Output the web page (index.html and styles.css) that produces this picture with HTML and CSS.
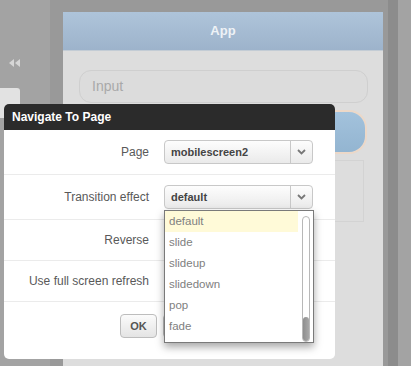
FILE: index.html
```html
<!DOCTYPE html>
<html lang="en">
<head>
    <meta charset="UTF-8">
    <meta name="viewport" content="width=device-width, initial-scale=1.0">
    <title>Navigate To Page</title>
    <link rel="stylesheet" href="styles.css">
</head>
<body>
    <div class="stage">
        <div class="sidebar">
            <div class="collapse">
                <svg width="12" height="8" viewBox="0 0 12 8"><path d="M0 4l5-4v8zM6 4l5-4v8z" fill="#d6d6d6"/></svg>
            </div>
            <div class="side-card"></div>
        </div>

        <div class="phone">
            <div class="screen">
                <div class="app-header">App</div>
                <div class="app-content">
                    <div class="app-input">Input</div>
                    <div class="app-button"></div>
                    <div class="app-box"></div>
                </div>
            </div>
        </div>
    </div>

    <!-- modal dialog over the designer -->
    <div class="dialog">
        <div class="dialog-title">Navigate To Page</div>

        <div class="form-row">
            <label class="form-label">Page</label>
            <div class="select">
                <span class="select-value">mobilescreen2</span>
                <span class="select-arrow">
                    <svg width="9" height="6" viewBox="0 0 9 6"><path d="M1 1l3.5 3.5L8 1" fill="none" stroke="#777" stroke-width="1.8"/></svg>
                </span>
            </div>
        </div>

        <div class="form-row">
            <label class="form-label">Transition effect</label>
            <div class="select">
                <span class="select-value">default</span>
                <span class="select-arrow">
                    <svg width="9" height="6" viewBox="0 0 9 6"><path d="M1 1l3.5 3.5L8 1" fill="none" stroke="#777" stroke-width="1.8"/></svg>
                </span>
            </div>
        </div>

        <div class="form-row check-row">
            <label class="form-label">Reverse</label>
            <input type="checkbox" class="check">
        </div>

        <div class="form-row check-row">
            <label class="form-label">Use full screen refresh</label>
            <input type="checkbox" class="check">
        </div>

        <div class="dialog-buttons">
            <button class="btn">OK</button>
            <button class="btn">Cancel</button>
        </div>
    </div>

    <div class="dropdown">
        <ul class="options">
            <li class="selected">default</li>
            <li>slide</li>
            <li>slideup</li>
            <li>slidedown</li>
            <li>pop</li>
            <li>fade</li>
            <li>flip</li>
        </ul>
        <div class="scrollbar">
            <div class="scroll-track">
                <div class="scroll-thumb"></div>
            </div>
        </div>
    </div>
</body>
</html>
```

FILE: styles.css
```css
body {
    margin: 0;
    width: 411px;
    height: 366px;
    overflow: hidden;
    background-color: #a3a3a3;
    font-family: 'Liberation Sans', Arial, sans-serif;
    position: relative;
}
.stage {
    display: flex;
    height: 366px;
}
.sidebar {
    width: 50px;
    padding-top: 59px;
    box-sizing: border-box;
}
.collapse {
    padding-left: 9px;
    height: 8px;
    line-height: 0;
}
.side-card {
    margin-top: 21px;
    width: 20px;
    height: 30px;
    background-color: #e2e2e2;
    border-radius: 0 3px 3px 0;
}
.phone {
    width: 348px;
    background-color: #999;
    padding: 12px 15px 0 13px;
    box-sizing: border-box;
    border-right: 10px solid #8c8c8c;
}
.screen {
    width: 320px;
    height: 354px;
    background-color: #dddddd;
}
.app-header {
    height: 38px;
    line-height: 38px;
    text-align: center;
    color: #eef2f6;
    font-weight: bold;
    font-size: 13px;
    background: linear-gradient(#aec4da, #9db3cb);
    border-bottom: 1px solid #c3ccd5;
}
.app-content {
    padding: 19px 15px 0 16px;
}
.app-input {
    height: 31px;
    line-height: 31px;
    border: 1px solid #cfcfcf;
    border-radius: 12px;
    background-color: #dcdcdc;
    color: #a9a9a9;
    font-size: 14px;
    padding-left: 12px;
}
.app-button {
    margin-top: 9px;
    margin-right: 3px;
    height: 40px;
    border-radius: 16px;
    background: linear-gradient(#a3c2dc, #93b5d1);
    box-shadow: 0 0 0 2px #ecd8c8;
}
.app-box {
    margin-top: 8px;
    margin-right: 4px;
    height: 60px;
    border: 1px solid #d3d3d3;
}

/* dialog */
.dialog {
    position: absolute;
    left: 4px;
    top: 104px;
    width: 331px;
    height: 255px;
    background-color: #fff;
    border-radius: 5px;
    overflow: hidden;
}
.dialog-title {
    height: 26px;
    line-height: 26px;
    background-color: #2b2b2b;
    color: #fff;
    font-weight: bold;
    font-size: 12px;
    padding-left: 8px;
}
.form-row {
    display: flex;
    align-items: center;
    padding: 10px 0;
    border-bottom: 1px solid #ebebeb;
}
.check-row {
    height: 20px;
}
.form-label {
    width: 145px;
    margin-right: 15px;
    text-align: right;
    font-size: 12px;
    color: #595959;
}
.select {
    display: flex;
    width: 149px;
    height: 24px;
    box-sizing: border-box;
    border: 1px solid #c8c8c8;
    border-radius: 4px;
    background: linear-gradient(#fdfdfd, #eaeaea);
}
.select-value {
    flex: 1;
    line-height: 22px;
    padding-left: 6px;
    font-size: 11px;
    font-weight: bold;
    color: #444;
}
.select-arrow {
    width: 21px;
    border-left: 1px solid #c8c8c8;
    display: flex;
    align-items: center;
    justify-content: center;
}
.check {
    margin: 0;
}
.dialog-buttons {
    display: flex;
    justify-content: center;
    gap: 6px;
    padding-top: 12px;
}
.btn {
    height: 24px;
    padding: 0 9px;
    border: 1px solid #bdbdbd;
    border-radius: 4px;
    background: linear-gradient(#fbfbfb, #e4e4e4);
    font-family: 'Liberation Sans', Arial, sans-serif;
    font-size: 11px;
    font-weight: bold;
    color: #555;
}

/* open select list */
.dropdown {
    position: absolute;
    left: 164px;
    top: 210px;
    width: 150px;
    height: 133px;
    box-sizing: border-box;
    border: 1px solid #7a7a7a;
    background-color: #fff;
    box-shadow: 0 4px 8px rgba(0, 0, 0, 0.35);
    display: flex;
    overflow: hidden;
}
.options {
    flex: 1;
    list-style: none;
    margin: 0;
    padding: 0;
}
.options li {
    height: 21px;
    line-height: 21px;
    padding-left: 4px;
    font-size: 11.5px;
    color: #808080;
}
.options li.selected {
    background-color: #fffad8;
}
.scrollbar {
    width: 15px;
    padding: 5px 3px 2px 4px;
    box-sizing: border-box;
}
.scroll-track {
    height: 100%;
    border: 1px solid #b8b8b8;
    border-radius: 4px;
    display: flex;
    flex-direction: column;
    justify-content: flex-end;
}
.scroll-thumb {
    height: 24px;
    border-radius: 3px;
    background: linear-gradient(90deg, #8e8e8e, #a8a8a8);
}
```
